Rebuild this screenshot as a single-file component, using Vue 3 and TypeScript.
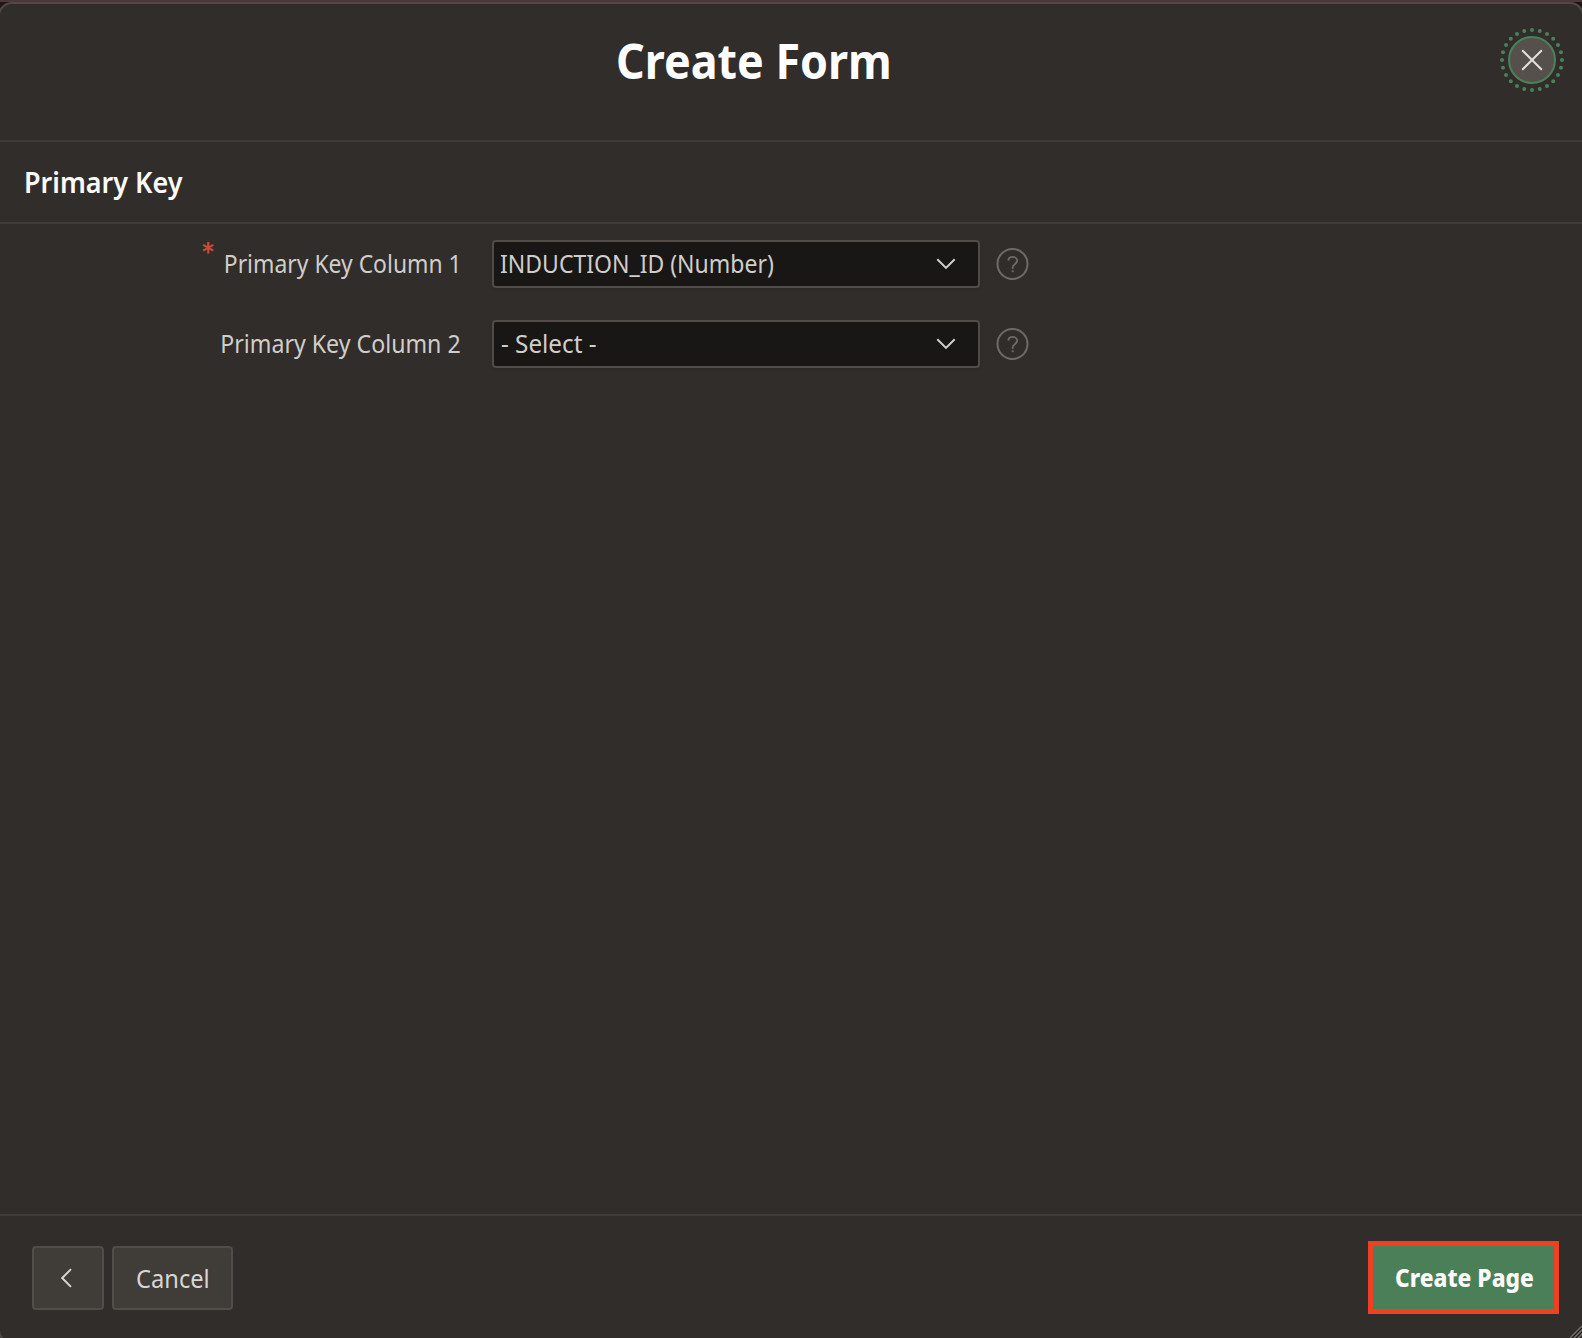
<script setup lang="ts">
interface Field {
  label: string
  value: string
  required: boolean
  labelClass: string
  valueClass: string
}

const fields: Field[] = [
  { label: 'Primary Key Column 1', value: 'INDUCTION_ID (Number)', required: true, labelClass: 'label-one', valueClass: 'value-one' },
  { label: 'Primary Key Column 2', value: '- Select -', required: false, labelClass: 'label-two', valueClass: 'value-two' },
]

const dots = Array.from({ length: 24 }, (_, i) => {
  const a = (i * Math.PI) / 12
  return { x: 32 + 30 * Math.cos(a), y: 32 + 30 * Math.sin(a) }
})
</script>

<template>
  <div class="backdrop">
    <section class="dialog">
      <header class="title-bar">
        <h1 class="title"><span class="t">Create Form</span></h1>
        <button class="close" aria-label="Close">
          <svg width="64" height="64" viewBox="0 0 64 64">
            <circle v-for="(d, i) in dots" :key="i" :cx="d.x" :cy="d.y" r="2" fill="#4b8059" />
            <circle cx="32" cy="32" r="23" fill="#56504c" stroke="#4b8059" stroke-width="2" />
            <path d="M22.2 22.2 41.8 41.8M41.8 22.2 22.2 41.8" stroke="#e2dfdc" stroke-width="2" fill="none" />
          </svg>
        </button>
      </header>
      <div class="region-head"><h2 class="t">Primary Key</h2></div>
      <main class="form">
        <div v-for="f in fields" :key="f.label" class="field">
          <div class="label-cell">
            <span v-if="f.required" class="star">*</span>
            <label class="t" :class="f.labelClass">{{ f.label }}</label>
          </div>
          <div class="select">
            <span class="t" :class="f.valueClass">{{ f.value }}</span>
            <svg class="chevron" width="20" height="12" viewBox="0 0 20 12">
              <path d="M1.3 1.2 10 9.9 18.7 1.2" fill="none" stroke="#d0cecb" stroke-width="2" />
            </svg>
          </div>
          <svg class="help" width="33" height="32" viewBox="0 0 33 32" fill="none" stroke="#6f6b68">
            <circle cx="16.5" cy="16" r="15" stroke-width="2" />
            <path d="M12.3 12.6C12.4 10.2 14 8.8 16.5 8.8S21.1 10.3 21.1 12.6C21.1 14.3 20.3 15.2 18.8 16.3 17.3 17.4 16.7 18 16.7 19.8V20.8" stroke-width="1.8" />
            <path d="M16.7 22.3V24.2" stroke-width="2" />
          </svg>
        </div>
      </main>
      <footer class="footer">
        <button class="btn back" aria-label="Back">
          <svg width="12" height="20" viewBox="0 0 12 20">
            <path d="M10 1.2 1.2 10 10 18.8" fill="none" stroke="#d8d6d3" stroke-width="1.9" />
          </svg>
        </button>
        <button class="btn cancel"><span class="t">Cancel</span></button>
        <button class="create"><span class="t">Create Page</span></button>
      </footer>
      <svg class="grip" width="12" height="12" viewBox="0 0 12 12" fill="none">
        <path d="M-1 13 13 -1M3 13 13 3M7 13 13 7" stroke="#77736f" stroke-width="1.3" />
        <path d="M1 13 13 1M5 13 13 5M9 13 13 9" stroke="#1b1918" stroke-width="1" />
      </svg>
    </section>
  </div>
</template>

<style>
body {
  margin: 0;
  background: #1d1816;
}
</style>

<style scoped>
* {
  box-sizing: border-box;
}
.backdrop {
  width: 1582px;
  height: 1338px;
  overflow: hidden;
  position: relative;
  padding-top: 2px;
  background: linear-gradient(#4c373a 0 2px, #1d1816 2px);
  font-family: "Noto Sans", "Open Sans", sans-serif;
  color: #d0cecb;
}
.dialog {
  width: 1586px;
  height: 1342px;
  margin-left: -2px;
  border: 2px solid #514947;
  border-radius: 14px;
  background: #312d2a;
  display: flex;
  flex-direction: column;
}
h1,
h2 {
  margin: 0;
}
button {
  font-family: inherit;
  color: inherit;
  padding: 0;
  border: 0;
  background: none;
  text-align: left;
}
.t {
  white-space: nowrap;
  display: block;
  transform-origin: left center;
}
.title .t {
  transform: scaleX(0.931);
}
.region-head .t {
  transform: scaleX(0.963);
}
.label-one {
  transform: translateX(1px) scaleX(0.916);
  transform-origin: right center;
}
.label-two {
  transform: scaleX(0.926);
  transform-origin: right center;
}
.value-one {
  transform: scaleX(0.92);
}
.value-two {
  transform: translateX(1px) scaleX(0.97);
}
.cancel .t {
  transform: scaleX(0.947);
}
.create .t {
  transform: scaleX(0.912);
}
.title-bar {
  height: 138px;
  flex: none;
  border-bottom: 2px solid #403c39;
  display: flex;
  justify-content: space-between;
  align-items: flex-start;
  padding: 24px 18px 0 616px;
}
.title {
  color: #fff;
  font-size: 49px;
  line-height: 65px;
  font-weight: 700;
}
.title .t {
  transform: scaleX(0.915);
}
.close {
  width: 64px;
  height: 64px;
}
.close svg {
  display: block;
}
.region-head {
  height: 82px;
  flex: none;
  border-bottom: 2px solid #403c39;
  padding: 20px 0 0 24px;
  color: #fcfbfa;
}
.region-head h2 {
  font-size: 28px;
  line-height: 41px;
  font-weight: 650;
}
.form {
  flex: 1;
  display: flex;
  flex-direction: column;
  gap: 32px;
  padding-top: 16px;
}
.field {
  display: flex;
  height: 48px;
  font-size: 25px;
}
.label-cell {
  width: 492px;
  display: flex;
  justify-content: flex-end;
  padding-right: 31px;
  line-height: 47px;
}
.star {
  color: #c74e38;
  font-family: Inter, sans-serif;
  font-size: 28px;
  font-weight: 500;
  line-height: 27px;
  margin-right: -14px;
}
.select {
  width: 488px;
  border: 2px solid #514c48;
  border-radius: 4px;
  background: #191715;
  box-shadow: 0 2px 3px rgba(0, 0, 0, 0.12);
  display: flex;
  justify-content: space-between;
  padding: 0 22px 0 6px;
  line-height: 43px;
}
.chevron {
  margin-top: 16px;
}
.help {
  margin: 8px 0 0 16px;
}
.footer {
  height: 124px;
  flex: none;
  border-top: 2px solid #403c39;
  margin-bottom: 4px;
  display: flex;
  padding: 30px 23px 0 32px;
  font-size: 25px;
}
.btn {
  height: 64px;
  border: 2px solid #514d49;
  border-radius: 4px;
  background: #403c38;
  font-size: 25px;
  line-height: 57px;
  color: #d8d6d3;
}
.back {
  width: 72px;
  margin-right: 8px;
  padding: 0 0 0 27px;
}
.back svg {
  display: block;
}
.cancel {
  width: 121px;
  padding-left: 22px;
}
.create {
  width: 191px;
  height: 73px;
  margin: -5px 0 0 auto;
  border: 5px solid #ee4023;
  background: #4b7f58;
  color: #fcfbfa;
  font-size: 25px;
  font-weight: 800;
  line-height: 61px;
  padding-left: 22px;
}
.grip {
  position: absolute;
  right: 0;
  bottom: 0;
}
</style>
